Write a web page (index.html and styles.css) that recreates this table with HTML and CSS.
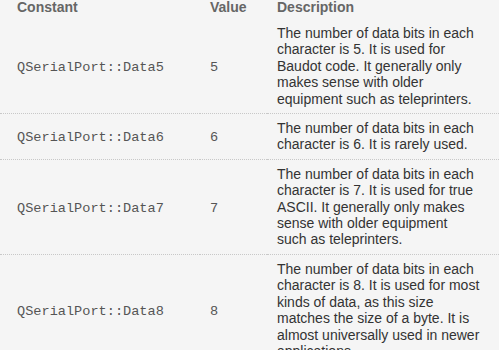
FILE: index.html
```html
<!DOCTYPE html>
<html lang="en">
<head>
  <meta charset="UTF-8">
  <title>QSerialPort::DataBits</title>
  <link rel="stylesheet" href="styles.css">
</head>
<body>
  <table class="value-table">
    <colgroup>
      <col class="col-const">
      <col class="col-value">
      <col class="col-desc">
    </colgroup>
    <thead>
      <tr>
        <th>Constant</th>
        <th>Value</th>
        <th>Description</th>
      </tr>
    </thead>
    <tbody>
      <tr>
        <td class="const"><code>QSerialPort::Data5</code></td>
        <td class="value"><code>5</code></td>
        <td class="desc">The number of data bits in each<br>character is 5. It is used for<br>Baudot code. It generally only<br>makes sense with older<br>equipment such as teleprinters.</td>
      </tr>
      <tr>
        <td class="const"><code>QSerialPort::Data6</code></td>
        <td class="value"><code>6</code></td>
        <td class="desc">The number of data bits in each<br>character is 6. It is rarely used.</td>
      </tr>
      <tr>
        <td class="const"><code>QSerialPort::Data7</code></td>
        <td class="value"><code>7</code></td>
        <td class="desc">The number of data bits in each<br>character is 7. It is used for true<br>ASCII. It generally only makes<br>sense with older equipment<br>such as teleprinters.</td>
      </tr>
      <tr>
        <td class="const"><code>QSerialPort::Data8</code></td>
        <td class="value"><code>8</code></td>
        <td class="desc">The number of data bits in each<br>character is 8. It is used for most<br>kinds of data, as this size<br>matches the size of a byte. It is<br>almost universally used in newer<br>applications.</td>
      </tr>
    </tbody>
  </table>
</body>
</html>
```

FILE: styles.css
```css
* {
  box-sizing: border-box;
  margin: 0;
  padding: 0;
}

body {
  font-family: "Liberation Sans", Arial, sans-serif;
  background: #f5f5f5;
  color: #363636;
  overflow: hidden;
}

.value-table {
  width: 499px;
  table-layout: fixed;
  border-collapse: collapse;
  margin-top: -1px;
}

.col-const {
  width: 200px;
}

.col-value {
  width: 67px;
}

.col-desc {
  width: 232px;
}

.value-table th {
  text-align: left;
  font-size: 14px;
  line-height: 16px;
  font-weight: bold;
  color: #666;
  padding: 0 8px 4px 10px;
}

.value-table th:first-child {
  padding-left: 17px;
}

.value-table td {
  vertical-align: middle;
  padding: 6px 4px 6px 10px;
  border-bottom: 1px dotted #c8c8c8;
}

.value-table td.const {
  padding-left: 17px;
}

.value-table code {
  font-family: "Liberation Mono", "Courier New", monospace;
  font-size: 13.6px;
  color: #555;
}

.desc {
  font-size: 14px;
  line-height: 16.4px;
  color: #333;
  white-space: nowrap;
}
```
